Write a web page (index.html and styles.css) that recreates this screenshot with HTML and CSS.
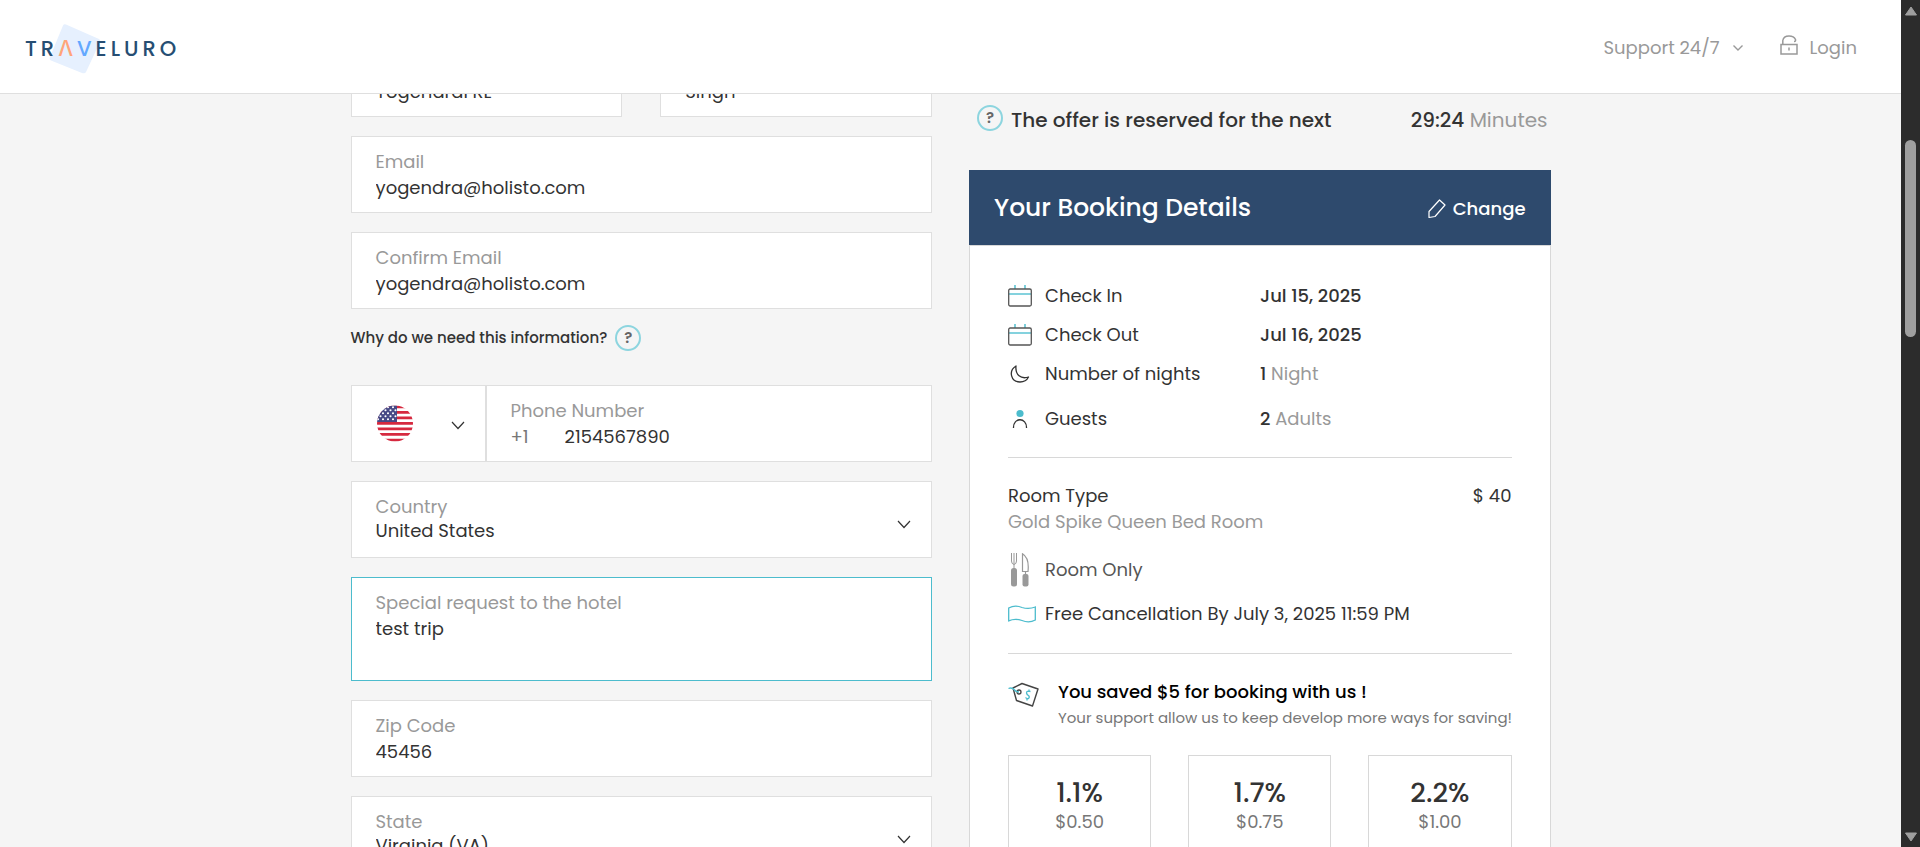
FILE: index.html
```html
<!DOCTYPE html>
<html lang="en">
<head>
<meta charset="utf-8">
<title>Traveluro – Booking</title>
<link rel="stylesheet" href="styles.css">
</head>
<body>
<div class="viewport">
<div class="page">
  <header class="topbar">
    <a class="logo" href="#" aria-label="Traveluro">
      <svg class="logo-mark" width="52" height="52" viewBox="0 0 52 52" aria-hidden="true"><path d="M17 1.500 L50 16 Q52 17 51 19 L37 49 Q36 51 33 50 L2 37.500 Q0 36.500 1 34 L14 2.500 Q15 0.500 17 1.500Z" fill="#e6f0fe"/></svg>
      <span>T</span><span>R</span><span class="logo-a">Λ</span><span class="logo-v">V</span><span>E</span><span>L</span><span>U</span><span>R</span><span>O</span>
    </a>
    <nav class="topnav">
      <button class="nav-item" type="button">Support 24/7
        <svg width="12" height="8" viewBox="0 0 12 8"><path d="M1.500 1.500 L6 6 L10.500 1.500" fill="none" stroke="#999" stroke-width="1.400"/></svg>
      </button>
      <a class="nav-item" href="#">
        <svg class="lock" width="18" height="20" viewBox="0 0 18 20" fill="none" stroke="#999" stroke-width="1.500"><rect x="1" y="9.500" width="16" height="9.500"/><path d="M2.800 9.500 V5.500 Q3.500 1 9 1 Q14 1 15.500 4.500 Q16 6.500 14 6.500"/><path d="M9 12.500 V15.500"/></svg>
        Login</a>
    </nav>
  </header>

  <main class="content">
    <form class="guest-form">
      <div class="name-row">
        <div class="field"><label for="first">First Name</label><input id="first" type="text" value="YogendraFRL"></div>
        <div class="field"><label for="last">Last Name</label><input id="last" type="text" value="Singh"></div>
      </div>
      <div class="field"><label for="email">Email</label><input id="email" type="email" value="yogendra@holisto.com"></div>
      <div class="field"><label for="email2">Confirm Email</label><input id="email2" type="email" value="yogendra@holisto.com"></div>
      <div class="why">Why do we need this information? <button class="help" type="button" aria-label="More information">?</button></div>
      <div class="phone-row">
        <button class="flag-select" type="button" aria-label="Country code">
          <svg width="36" height="37" viewBox="0 0 36 36" aria-hidden="true">
            <defs><clipPath id="round"><circle cx="18" cy="18" r="18"/></clipPath></defs>
            <g clip-path="url(#round)">
              <rect width="36" height="36" fill="#fff"/>
              <path d="M0 1.400H36M0 6.900H36M0 12.400H36M0 17.900H36M0 23.400H36M0 28.900H36M0 34.600H36" stroke="#d6293f" stroke-width="2.600"/>
              <rect width="20" height="16.500" fill="#474a86"/>
              <path d="M6 1.800H20M3.500 4.800H20M1 7.800H20M3.500 10.800H20M1 13.800H20" stroke="#fff" stroke-width="2.100" stroke-linecap="round" stroke-dasharray="0 5"/>
            </g>
          </svg>
          <svg class="flag-chevron" width="14" height="9" viewBox="0 0 14 9"><path d="M1 1 L7 7.500 L13 1" fill="none" stroke="#333" stroke-width="1.200"/></svg>
        </button>
        <div class="field phone-field"><label for="phone">Phone Number</label>
          <div class="phone-value"><span class="prefix">+1</span><input id="phone" type="tel" value="2154567890"></div></div>
      </div>
      <div class="field select-field"><label for="country">Country</label><select id="country"><option>United States</option></select></div>
      <div class="field field-active"><label for="request">Special request to the hotel</label><textarea id="request" rows="2">test trip</textarea></div>
      <div class="field"><label for="zip">Zip Code</label><input id="zip" type="text" value="45456"></div>
      <div class="field select-field"><label for="state">State</label><select id="state"><option>Virginia (VA)</option></select></div>
    </form>

    <aside class="summary">
      <div class="offer">
        <button class="help" type="button" aria-label="About the reservation">?</button>
        <span class="offer-text">The offer is reserved for the next</span>
        <span class="timer"><b>29:24</b> Minutes</span>
      </div>
      <section class="card">
        <div class="card-head">
          <h2>Your Booking Details</h2>
          <a class="change" href="#"><svg width="18" height="20" viewBox="0 0 18 20" fill="none" stroke="#fff" stroke-width="1.200"><path d="M1 12.500 L11.500 1 L17 6 L7 17.500 L1 18.500Z" stroke-linejoin="round"/></svg>Change</a>
        </div>
        <div class="card-body">
          <dl class="details">
            <div class="row"><dt><svg width="24" height="22" viewBox="0 0 24 22" fill="none"><path d="M7 0V4M17 0V4M1 9H23" stroke="#5cc3d3" stroke-width="1.600"/><rect x="0.700" y="4" width="22.600" height="17" rx="1.500" stroke="#555" stroke-width="1.300"/></svg>Check In</dt><dd><b>Jul 15, 2025</b></dd></div>
            <div class="row"><dt><svg width="24" height="22" viewBox="0 0 24 22" fill="none"><path d="M7 0V4M17 0V4M1 9H23" stroke="#5cc3d3" stroke-width="1.600"/><rect x="0.700" y="4" width="22.600" height="17" rx="1.500" stroke="#555" stroke-width="1.300"/></svg>Check Out</dt><dd><b>Jul 16, 2025</b></dd></div>
            <div class="row"><dt><svg width="24" height="20" viewBox="0 0 24 20" fill="none"><path d="M8 2 C0 7 3 18 12 18 C16 18 19 16 20.500 13 C13 15.500 7 11 8 2Z" stroke="#333" stroke-width="1.300" stroke-linejoin="round"/></svg>Number of nights</dt><dd><b>1</b> Night</dd></div>
            <div class="row row-guests"><dt><svg width="24" height="20" viewBox="0 0 24 20" fill="none"><circle cx="12" cy="4.500" r="3.600" fill="#4cbccd"/><path d="M5.500 19 C5 8 19 8 18.500 19" stroke="#333" stroke-width="1.300"/></svg>Guests</dt><dd><b>2</b> Adults</dd></div>
          </dl>
          <hr>
          <div class="room">
            <div class="room-line"><span>Room Type</span><span>$ 40</span></div>
            <div class="room-name">Gold Spike Queen Bed Room</div>
            <div class="perk perk-board"><svg width="28" height="34" viewBox="0 0 28 34" fill="none" stroke="#999"><path d="M3.500 0V8Q3.500 11 6 11.500Q8.500 11 8.500 8V0M6 0V15"/><rect x="3" y="15" width="6" height="18.500" rx="2.500" fill="#999" stroke="none"/><path d="M14.500 0.800V18.500H20Q21.500 5 14.500 0.800ZM17.500 18.500V22" stroke-width="1.200"/><rect x="14.500" y="21" width="6" height="12.500" rx="2" fill="#999" stroke="none"/></svg>Room Only</div>
            <div class="perk"><svg width="28" height="18" viewBox="0 0 28 18" fill="none"><path d="M0.700 3 Q7 -0.500 14 2.500 Q21 4.500 27.300 2V15 Q21 18.500 14 15.500 Q7 13 0.700 15.800Z" stroke="#4cbccd" stroke-width="1.300"/></svg>Free Cancellation By July 3, 2025 11:59 PM</div>
          </div>
          <hr>
          <div class="saved">
            <svg class="tag" width="32" height="26" viewBox="0 0 32 26" fill="none"><path d="M5 6 L14 1.500 L30 7 L24.500 24 L8.500 18.500Z" stroke="#444" stroke-width="1.400" stroke-linejoin="round"/><circle cx="11" cy="10" r="2" stroke="#444" stroke-width="1.300"/><path d="M0.500 6.500 Q4 5 6.500 8 Q8 10 11 10M22.500 9.500Q18.500 8.500 18.500 11 Q19 13 20.500 13.500 Q22 15 20.500 16.500 Q18.500 17 17.500 15.500M21 7.500V10M19 16V18.500" stroke="#4cbccd" stroke-width="1.300"/></svg>
            <div><div class="saved-title">You saved $5 for booking with us !</div><div class="saved-note">Your support allow us to keep develop more ways for saving!</div></div>
          </div>
          <div class="tips">
            <button class="tip" type="button"><b>1.1%</b><span>$0.50</span></button>
            <button class="tip" type="button"><b>1.7%</b><span>$0.75</span></button>
            <button class="tip" type="button"><b>2.2%</b><span>$1.00</span></button>
          </div>
        </div>
      </section>
    </aside>
  </main>
</div>
<div class="scrollbar" aria-hidden="true">
  <svg width="12" height="10" viewBox="0 0 12 10"><path d="M6 1 L11.500 9 H0.500Z" fill="#9f9f9f" stroke="#9f9f9f" stroke-linejoin="round"/></svg>
  <div class="track"><div class="thumb"></div></div>
  <svg width="12" height="10" viewBox="0 0 12 10"><path d="M6 9 L11.500 1 H0.500Z" fill="#9f9f9f" stroke="#9f9f9f" stroke-linejoin="round"/></svg>
</div>
</div>
</body>
</html>
```
FILE: styles.css
```css
* { box-sizing: border-box; }
body { margin: 0; font-family: Poppins, Inter, sans-serif; font-size: 18px; line-height: 26px; color: #333; background: #f5f5f5; }
button, input, select, textarea { font: inherit; color: inherit; border: 0; padding: 0; margin: 0; background: none; }
a { color: inherit; text-decoration: none; }
b { font-weight: 500; color: #333; }
svg { flex: none; }

.viewport { display: flex; height: 100vh; overflow: hidden; }
.page { position: relative; flex: 1; overflow: hidden; }

.topbar { position: absolute; top: 0; left: 0; right: 0; z-index: 2; display: flex; justify-content: space-between; align-items: center; height: 94px; padding: 0 44px 0 25px; background: #fff; border-bottom: 1px solid #dfdfdf; }
.logo { position: relative; display: flex; gap: 4px; font-size: 21px; font-weight: 500; color: #264e73; }
.logo span { position: relative; margin-top: 5px; }
.logo-mark { position: absolute; left: 24px; top: -8px; }
.logo .logo-a { color: #ffa47a; }
.logo .logo-v { color: #62a8ff; }
.topnav { display: flex; gap: 36px; padding-top: 2px; color: #999; }
.nav-item { display: flex; align-items: center; gap: 12px; }
.lock { margin-bottom: 6px; }

.content { display: grid; grid-template-columns: repeat(2, minmax(0, 1fr)); gap: 37px; max-width: 1200px; margin: 0 auto; padding-top: 40px; align-items: start; }
.guest-form { display: flex; flex-direction: column; gap: 19px; }
.name-row { display: grid; grid-template-columns: 1fr 1fr; gap: 38px; }
.field { min-width: 0; padding: 12px 24px; background: #fff; border: 1px solid #dfdfdf; }
.field label { display: block; color: #999; }
.field input, .field select, .field textarea { display: block; width: 100%; height: 25px; line-height: 25px; outline: 0; }
.field textarea { height: 52px; resize: none; overflow: hidden; }
.field-active { border-color: #4cbccd; }
.field.select-field { padding: 12px 20px 16px 24px; }
.field.select-field select { height: 21px; line-height: 21px; appearance: none; background: url("data:image/svg+xml,%3Csvg xmlns='http://www.w3.org/2000/svg' width='14' height='9'%3E%3Cpath d='M1 1L7 7.500L13 1' fill='none' stroke='%23333' stroke-width='1.200'/%3E%3C/svg%3E") no-repeat right top; }
.why { display: flex; align-items: center; gap: 8px; height: 38px; padding-bottom: 18px; font-size: 15px; font-weight: 500; }
.help { width: 26px; height: 26px; border: 2px solid #8dd5df; border-radius: 50%; font-size: 15px; line-height: 20px; font-weight: 600; color: #666; text-align: center; }
.phone-row { display: flex; }
.flag-select { display: flex; align-items: center; justify-content: space-between; width: 135px; padding: 0 20px 0 25px; background: #fff; border: 1px solid #dfdfdf; }
.flag-chevron { margin-top: 4px; }
.phone-field { flex: 1; }
.phone-value { display: flex; gap: 36px; line-height: 25px; }
.prefix { color: #777; }

.offer { display: flex; align-items: center; gap: 8px; margin: 65px 3px 0 8px; height: 26px; font-size: 20px; }
.offer-text { padding-top: 3px; font-weight: 500; }
.timer { margin-left: auto; padding-top: 3px; color: #999; }
.card { margin-top: 39px; background: #fff; }
.card-head { display: flex; justify-content: space-between; align-items: center; height: 75px; padding: 0 25px; background: #2e4a6d; color: #fff; }
.card-head h2 { margin: 0; font-size: 25px; font-weight: 500; }
.change { display: flex; align-items: center; gap: 7px; padding-top: 3px; font-weight: 500; }
.card-body { padding: 30px 38px 60px; border: 1px solid #d8d8d8; }
.card-body hr { height: 1px; margin: 0; border: 0; background: #d8d8d8; }
.details { margin: 0; padding-bottom: 13px; }
.row { display: grid; grid-template-columns: 252px 1fr; align-items: center; height: 39px; }
.row-guests { height: 51px; }
.row dt { display: flex; align-items: center; gap: 13px; }
.row dd { margin: 0; color: #999; }
.room { padding: 25px 0 17px; }
.room-line { display: flex; justify-content: space-between; }
.room-name { color: #999; }
.perk { display: flex; align-items: center; gap: 9px; height: 44px; }
.perk-board { margin-top: 13px; color: #555; }
.saved { display: flex; gap: 18px; padding-top: 25px; }
.tag { margin-top: 3px; }
.saved-title { color: #000; font-weight: 500; }
.saved-note { font-size: 15px; color: #777; white-space: nowrap; }
.tips { display: grid; grid-template-columns: repeat(3, 1fr); gap: 37px; margin-top: 24px; }
.tip { display: flex; flex-direction: column; align-items: center; height: 110px; padding-top: 21px; border: 1px solid #d8d8d8; color: #777; }
.tip b { font-size: 27px; line-height: 32px; }

.scrollbar { display: flex; flex-direction: column; align-items: center; width: 19px; padding: 6px 0 5px; background: #2c2c2c; }
.track { flex: 1; padding-top: 124px; }
.thumb { width: 11px; height: 197px; border-radius: 6px; background: #9f9f9f; }
```
